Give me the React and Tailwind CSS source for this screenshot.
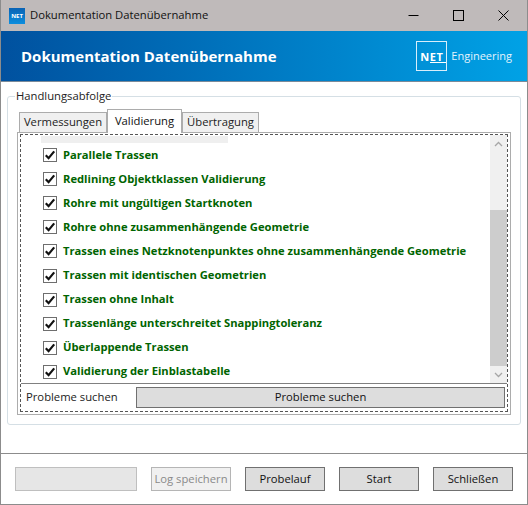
const rows = ["Parallele Trassen","Redlining Objektklassen Validierung","Rohre mit ungültigen Startknoten","Rohre ohne zusammenhängende Geometrie","Trassen eines Netzknotenpunktes ohne zusammenhängende Geometrie","Trassen mit identischen Geometrien","Trassen ohne Inhalt","Trassenlänge unterschreitet Snappingtoleranz","Überlappende Trassen","Validierung der Einblastabelle"];

function Check({label}) {
  return (
    <div className="h-[24.1px] flex items-center pl-[22px] shrink-0">
      <span className="w-[14px] h-[14px] border border-[#6e6e6e] bg-white flex items-center justify-center shrink-0">
        <svg width="12" height="12" viewBox="0 0 12 12"><path d="M1.8 6.2 L4.6 9.2 L10.2 2.4" fill="none" stroke="#111" strokeWidth="2.2"/></svg>
      </span>
      <span className="ml-[6px] font-bold text-[#006400] text-[11.2px] whitespace-nowrap">{label}</span>
    </div>
  );
}

function Btn({children, className = ""}) {
  return <div className={"border border-[#707070] bg-[#dddddd] flex items-center justify-center text-[11.25px] text-[#111] " + className}>{children}</div>;
}

export default function App() {
  return (
    <div className="w-[528px] h-[505px] bg-white flex flex-col border-x border-b border-[#8c8c8c] overflow-hidden" style={{fontFamily:'"Open Sans","Noto Sans",sans-serif'}}>
      <div className="h-[31px] -mx-px bg-[#bfbaba] flex items-center shrink-0 pl-[9px]">
        <div className="w-[16px] h-[16px] bg-gradient-to-b from-[#0a63b4] to-[#0d8ede] flex items-center justify-center text-white text-[6px] font-bold leading-none">NET</div>
        <span className="ml-[5px] text-[11.25px] text-[#111]">Dokumentation Datenübernahme</span>
        <div className="ml-auto flex items-center">
          <svg width="11" height="11" viewBox="0 0 11 11" className="mr-[34px]"><path d="M0.5 5.5H10.5" stroke="#000"/></svg>
          <svg width="11" height="11" viewBox="0 0 11 11" className="mr-[34px]"><rect x="0.5" y="0.5" width="10" height="10" fill="none" stroke="#000"/></svg>
          <svg width="11" height="11" viewBox="0 0 11 11" className="mr-[19px]"><path d="M0.5 0.5L10.5 10.5M10.5 0.5L0.5 10.5" stroke="#000"/></svg>
        </div>
      </div>
      <div className="h-[51px] shrink-0 bg-gradient-to-r from-[#01519f] to-[#00a2e6] border-b border-[#7b8a99] flex items-center pl-[20px] pr-[15px]">
        <span className="text-white font-bold text-[15px] whitespace-nowrap">Dokumentation Datenübernahme</span>
        <div className="ml-auto flex items-center">
          <div className="w-[31px] h-[30px] border border-[#d9eefb] flex items-center justify-center text-white font-bold text-[11px] tracking-[0.5px] leading-none relative">
            NET
            <span className="absolute right-0 bottom-[7px] w-[16px] h-px bg-white"></span>
          </div>
          <span className="ml-[4px] text-[#e3f3fc] text-[11px]">Engineering</span>
        </div>
      </div>
      <div className="relative mx-[6px] mt-[14px] h-[329px] border border-[#d5dfe5] rounded-[3px] px-[9px] pt-[12px] shrink-0">
        <span className="absolute left-[7px] -top-[9px] bg-white px-[1px] text-[11.25px] text-[#222] leading-[16px]">Handlungsabfolge</span>
        <div className="flex items-end h-[23px] relative z-10 pl-[2px]">
          <div className="h-[20px] w-[88px] border border-b-0 border-[#acacac] bg-[#f0f0f0] flex items-center justify-center text-[11.25px] text-[#222]">Vermessungen</div>
          <div className="h-[24px] w-[75px] border border-b-0 border-[#acacac] bg-white flex items-center justify-center text-[11.25px] text-[#111] -mb-px">Validierung</div>
          <div className="h-[20px] w-[77px] border border-b-0 border-[#acacac] bg-[#f0f0f0] flex items-center justify-center text-[11.25px] text-[#222]">Übertragung</div>
        </div>
        <div className="h-[283px] border border-[#acacac] pt-[1px] px-[2px] pb-[2px]">
          <div className="h-[278px] border border-dashed border-[#555] flex flex-col">
            <div className="h-[249px] flex border-b border-[#808080] shrink-0">
              <div className="flex-1 flex flex-col overflow-hidden">
                <div className="h-[7px] w-[187px] ml-[20px] mt-[1px] bg-[#efefef] shrink-0"></div>
                <div>
                  {rows.map(r => <Check key={r} label={r} />)}
                </div>
              </div>
              <div className="w-[17px] bg-[#f0f0f0] flex flex-col items-center shrink-0">
                <div className="h-[17px] flex items-center justify-center shrink-0">
                  <svg width="9" height="6" viewBox="0 0 9 6"><path d="M1 5L4.5 1.5L8 5" fill="none" stroke="#a6a6a6" strokeWidth="1.3"/></svg>
                </div>
                <div className="flex-1"></div>
                <div className="w-full h-[156px] bg-[#cdcdcd] shrink-0"></div>
                <div className="h-[17px] flex items-center justify-center shrink-0">
                  <svg width="9" height="6" viewBox="0 0 9 6"><path d="M1 1L4.5 4.5L8 1" fill="none" stroke="#a6a6a6" strokeWidth="1.3"/></svg>
                </div>
              </div>
            </div>
            <div className="flex-1 flex items-center pl-[5px] pr-[2px]">
              <span className="w-[110px] text-[11.25px] text-[#222] shrink-0">Probleme suchen</span>
              <Btn className="flex-1 h-[21px]">Probleme suchen</Btn>
            </div>
          </div>
        </div>
      </div>
      <div className="mt-[28px] border-t border-[#8c8c8c] flex-1 flex items-start pt-[13px] pl-[14px]">
        <div className="w-[122px] h-[24px] border border-[#bfbfbf] bg-[#e6e6e6]"></div>
        <div className="ml-[14px] w-[80px] h-[24px] border border-[#b5b5b5] bg-[#f0f0f0] flex items-center justify-center text-[11.25px] text-[#8a8a8a] whitespace-nowrap">Log speichern</div>
        <Btn className="ml-[14px] w-[80px] h-[24px]">Probelauf</Btn>
        <Btn className="ml-[14px] w-[80px] h-[24px]">Start</Btn>
        <Btn className="ml-[14px] w-[80px] h-[24px]">Schließen</Btn>
      </div>
    </div>
  );
}
